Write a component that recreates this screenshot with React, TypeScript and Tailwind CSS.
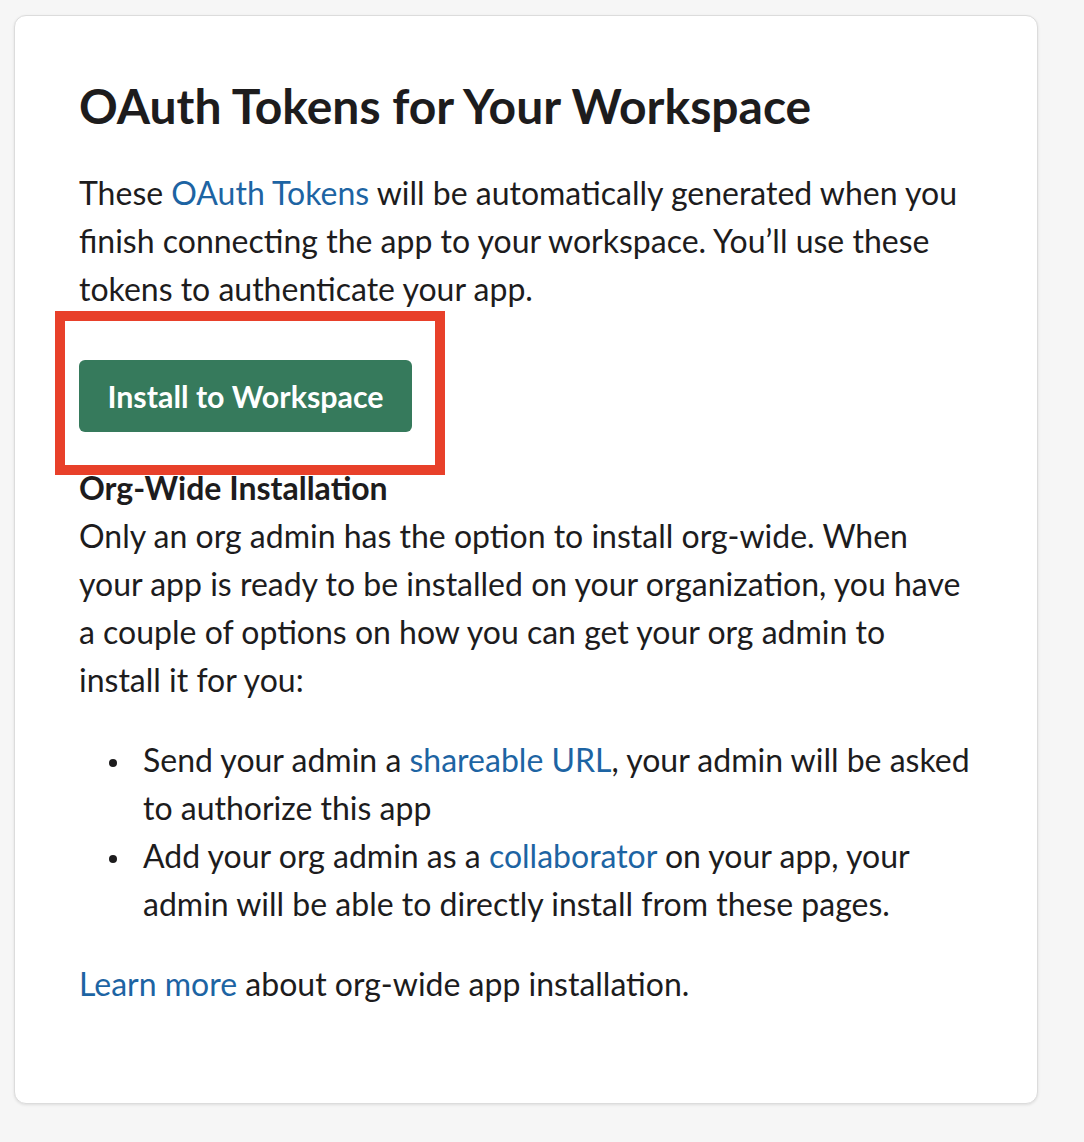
import React from "react";

const Link = ({ children }: { children: React.ReactNode }) => (
  <a className="text-[#1d64a3] no-underline">{children}</a>
);

const Bullet = ({ children }: { children: React.ReactNode }) => (
  <li className="flex">
    <div className="w-[64px] shrink-0 flex justify-end pr-[26px] pt-[23px]">
      <span className="block w-[8px] h-[8px] rounded-full bg-[#1d1c1d]" />
    </div>
    <div>{children}</div>
  </li>
);

export default function App() {
  return (
    <div
      className="min-h-screen w-full bg-[#f6f6f6] pt-[15px] pl-[14px]"
      style={{ fontFamily: "Lato, 'Noto Sans', sans-serif" }}
    >
      <div className="w-[1024px] h-[1089px] bg-white border border-[#dcdcdc] rounded-[12px] shadow-[0_1px_3px_rgba(0,0,0,0.10)] pl-[64px] pr-[40px] pt-[63px] text-[#1d1c1d] text-[32px] leading-[48px]">
        <h1 className="text-[48px] leading-[53px] font-bold">
          OAuth Tokens for Your Workspace
        </h1>
        <p className="mt-[37px] w-[885px]">
          These <Link>OAuth Tokens</Link> will be automatically generated when you finish
          connecting the app to your workspace. You’ll use these tokens to authenticate your
          app.
        </p>
        <div className="relative mt-[47px] w-[333px] h-[72px]">
          <button className="w-[333px] h-[72px] rounded-[6px] bg-[#367a5c] text-white font-bold text-[30.4px] leading-[72px] text-center">
            Install to Workspace
          </button>
          <div className="absolute left-[-24px] top-[-49px] w-[390px] h-[164px] border-[10px] border-[#e8402a] pointer-events-none" />
        </div>
        <h2 className="mt-[32px] font-bold">Org-Wide Installation</h2>
        <p className="w-[885px]">
          Only an org admin has the option to install org-wide. When your app is ready to be
          installed on your organization, you have a couple of options on how you can get your
          org admin to install it for you:
        </p>
        <ul className="mt-[32px] w-[900px]">
          <Bullet>
            Send your admin a <Link>shareable URL</Link>, your admin will be asked to authorize
            this app
          </Bullet>
          <Bullet>
            Add your org admin as a <Link>collaborator</Link> on your app, your admin will be
            able to directly install from these pages.
          </Bullet>
        </ul>
        <p className="mt-[32px]">
          <Link>Learn more</Link> about org-wide app installation.
        </p>
      </div>
    </div>
  );
}
